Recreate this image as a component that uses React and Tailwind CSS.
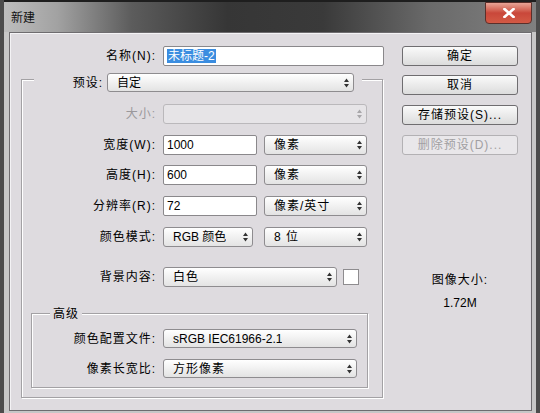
import React from 'react';

const Arrows = ({ disabled }) => (
    <svg width="5" height="10" viewBox="0 0 5 10" className="shrink-0">
        <path d="M2.5 0.5L5 4H0Z M0 6H5L2.5 9.5Z" fill={disabled ? '#a9a7aa' : '#333'} />
    </svg>
);

const Select = ({ className = '', children, disabled }) => (
    <div
        className={`flex items-center justify-between rounded-[3px] border pl-[9px] pr-[4px] ${
            disabled
                ? 'border-[#bab8bb] bg-[#e6e4e7] text-[#9a989b]'
                : 'border-[#8e8c8f] bg-gradient-to-b from-white to-[#e3e3e3]'
        } ${className}`}
    >
        <span className="truncate whitespace-nowrap">{children}</span>
        <Arrows disabled={disabled} />
    </div>
);

const Input = ({ className = '', children }) => (
    <div className={`flex items-center rounded-[2px] border border-[#8a888b] bg-white pl-[3px] ${className}`}>
        {children}
    </div>
);

const Button = ({ children, disabled, className = '' }) => (
    <div
        className={`flex h-[20px] w-[116px] items-center justify-center rounded-[3px] border tracking-[1px] ${
            disabled
                ? 'border-[#b3b1b4] bg-[#e9e7ea] text-[#a19fa2]'
                : 'border-[#6f6d70] bg-gradient-to-b from-[#fafafa] to-[#dcdcdc] text-black'
        } ${className}`}
    >
        {children}
    </div>
);

// label + control row inside the preset group
const Row = ({ label, labelW = 'w-[134px]', disabled, className = '', children }) => (
    <div className={`flex items-center ${className}`}>
        <span className={`${labelW} shrink-0 text-right tracking-[1px] ${disabled ? 'text-[#9a989b]' : ''}`}>{label}</span>
        <div className="ml-[7px] flex items-center">{children}</div>
    </div>
);

const App = () => {
    return (
        <div className="flex h-[413px] w-[540px] flex-col overflow-hidden border-x-4 border-[#4c4c4c] bg-[#c7c7c7] font-['Liberation_Sans','Noto_Sans_CJK_SC',sans-serif] text-[12px] text-black">
            {/* Title bar */}
            <div className="flex h-[32px] shrink-0 items-start border-t-2 border-[#1e1e1e] bg-[linear-gradient(90deg,#bdbdbd_0%,#a2a2a2_10%,#5c5c5c_24%,#363636_42%,#3a3a3a_60%,#6a6a6a_80%,#808080_100%)]">
                <span className="ml-[7px] mt-[9px] text-[12px] leading-[14px] text-[#111]">新建</span>
                <div className="ml-auto mr-[4px] flex h-[22px] w-[47px] items-center justify-center rounded-b-[4px] border border-[#5b2f2a] bg-gradient-to-b from-[#e8a496] via-[#c9473a] to-[#d35a45]">
                    <svg width="12" height="10" viewBox="0 0 12 10">
                        <path d="M1.5 1L10.5 9M10.5 1L1.5 9" stroke="#fff" strokeWidth="2.6" strokeLinecap="square" />
                    </svg>
                </div>
            </div>

            {/* Client area */}
            <div className="ml-[5px] flex h-[379px] w-[523px] shrink-0 border border-[#6e6c6f] bg-[#dedbdf] shadow-[inset_1px_1px_0_#f4f3f5]">
                {/* Left column */}
                <div className="flex w-[380px] shrink-0 flex-col pt-[13px]">
                    <div className="flex h-[20px] items-center">
                        <span className="w-[146px] shrink-0 text-right tracking-[1px]">名称(N):</span>
                        <Input className="ml-[7px] h-[20px] w-[221px]">
                            <span className="bg-[#3b8de0] px-[1px] leading-[14px] text-white">未标题-2</span>
                        </Input>
                    </div>

                    {/* Preset group */}
                    <div className="ml-[11px] mt-[13px] flex h-[319px] w-[362px] flex-col border border-[#a3a1a4] shadow-[inset_1px_1px_0_#fff,1px_1px_0_#fff]">
                        <div className="-mt-[7px] ml-[12px] flex h-[19px] w-[328px] items-center bg-[#dedbdf]">
                            <span className="w-[69px] shrink-0 text-right tracking-[1px]">预设:</span>
                            <Select className="ml-[4px] h-[19px] w-[247px]">自定</Select>
                        </div>

                        <Row label="大小:" disabled className="mt-[12px]">
                            <Select disabled className="h-[20px] w-[204px]">{''}</Select>
                        </Row>
                        <Row label="宽度(W):" className="mt-[11px]">
                            <Input className="h-[20px] w-[94px]">1000</Input>
                            <Select className="ml-[7px] h-[20px] w-[103px] tracking-[1px]">像素</Select>
                        </Row>
                        <Row label="高度(H):" className="mt-[10px]">
                            <Input className="h-[20px] w-[94px]">600</Input>
                            <Select className="ml-[7px] h-[20px] w-[103px] tracking-[1px]">像素</Select>
                        </Row>
                        <Row label="分辨率(R):" className="mt-[11px]">
                            <Input className="h-[20px] w-[94px]">72</Input>
                            <Select className="ml-[7px] h-[20px] w-[103px] tracking-[1px]">像素/英寸</Select>
                        </Row>
                        <Row label="颜色模式:" className="mt-[11px]">
                            <Select className="h-[20px] w-[90px]">RGB 颜色</Select>
                            <Select className="ml-[11px] h-[20px] w-[103px] tracking-[1px]">8 位</Select>
                        </Row>
                        <Row label="背景内容:" className="mt-[20px]">
                            <Select className="h-[20px] w-[174px] tracking-[1px]">白色</Select>
                            <div className="ml-[6px] h-[16px] w-[16px] border border-[#8e8c8f] bg-white" />
                        </Row>

                        {/* Advanced group */}
                        <div className="ml-[9px] mt-[26px] flex h-[75px] w-[337px] flex-col border border-[#a3a1a4] shadow-[inset_1px_1px_0_#fff,1px_1px_0_#fff]">
                            <span className="-mt-[8px] ml-[18px] h-[16px] self-start bg-[#dedbdf] px-[3px] leading-[16px] tracking-[1px]">高级</span>
                            <Row label="颜色配置文件:" labelW="w-[124px]" className="mt-[7px]">
                                <Select className="h-[19px] w-[194px]">sRGB IEC61966-2.1</Select>
                            </Row>
                            <Row label="像素长宽比:" labelW="w-[124px]" className="mt-[11px]">
                                <Select className="h-[19px] w-[194px] tracking-[1px]">方形像素</Select>
                            </Row>
                        </div>
                    </div>
                </div>

                {/* Right column */}
                <div className="ml-[12px] flex w-[116px] shrink-0 flex-col pt-[13px]">
                    <Button>确定</Button>
                    <Button className="mt-[9px]">取消</Button>
                    <Button className="mt-[10px]">存储预设(S)...</Button>
                    <Button disabled className="mt-[10px]">删除预设(D)...</Button>
                    <div className="mt-[117px] text-center leading-[16px] tracking-[1px]">图像大小:</div>
                    <div className="mt-[7px] text-center leading-[16px]">1.72M</div>
                </div>
            </div>
        </div>
    );
};

export default App;
